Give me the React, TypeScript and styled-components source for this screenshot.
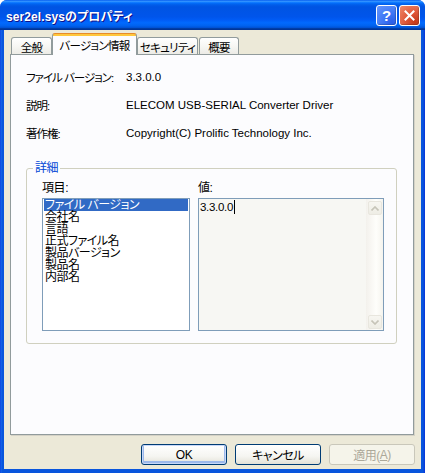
import React from 'react';
import styled, { createGlobalStyle } from 'styled-components';

const Global = createGlobalStyle`
  html, body { margin: 0; padding: 0; background: #ffffff; }
  body {
    font-family: "Liberation Sans", "Noto Sans CJK JP", sans-serif;
    font-size: 11px;
    letter-spacing: -0.4px;
    font-feature-settings: "palt";
    color: #000;
  }
  * { box-sizing: border-box; }
`;

const Window = styled.div`
  width: 425px;
  height: 473px;
  display: flex;
  flex-direction: column;
  background: linear-gradient(to right, #0831D9 0, #166AEE 1px, #0855DD 2px, #0855DD calc(100% - 2px), #0831D9 100%);
  border-radius: 7px 7px 0 0;
  overflow: hidden;
`;

const TitleBar = styled.div`
  height: 30px;
  flex: none;
  display: flex;
  align-items: center;
  padding: 0 5px 0 6px;
  background: linear-gradient(to bottom, #0058EE 0%, #3593FF 4%, #288EFF 6%, #127DFF 8%, #036FFC 10%, #0262EE 14%, #0057E5 20%, #0054E3 24%, #0055EB 56%, #005BF5 66%, #026AFE 76%, #0062EF 86%, #0052D6 92%, #0040AB 94%, #003092 100%);
`;

const Title = styled.div`
  flex: 1;
  color: #ffffff;
  font-weight: bold;
  font-size: 12px;
  letter-spacing: 0.1px;
  text-shadow: 1px 1px 0 #0F1089;
  white-space: nowrap;
`;

const CaptionButton = styled.div<{ $kind: 'help' | 'close' }>`
  width: 21px;
  height: 21px;
  margin-left: 2px;
  border: 1px solid #ffffff;
  border-radius: 3px;
  display: flex;
  align-items: center;
  justify-content: center;
  color: #ffffff;
  font-weight: bold;
  font-size: 15px;
  letter-spacing: 0;
  font-family: "Liberation Sans", sans-serif;
  background: ${(p) =>
    p.$kind === 'help'
      ? 'radial-gradient(circle at 80% 85%, #2B5EE8 0%, #3D76F5 40%, #6696FB 100%)'
      : 'radial-gradient(circle at 80% 85%, #C4391A 0%, #E0583A 45%, #EE8A6C 100%)'};
  box-shadow: inset -1px -1px 1px rgba(0, 0, 0, 0.2);
`;

const Body = styled.div`
  flex: 1;
  margin: 0 4px 4px;
  background: #ECE9D8;
  display: flex;
  flex-direction: column;
  padding: 3px 7px 0 6px;
`;

const TabRow = styled.div`
  height: 21px;
  flex: none;
  display: flex;
  align-items: flex-end;
  padding-left: 1px;
  position: relative;
  z-index: 1;
`;

const Tab = styled.div<{ $active?: boolean; $w: number; $gap?: number }>`
  width: ${(p) => p.$w}px;
  margin-left: ${(p) => p.$gap ?? 0}px;
  height: ${(p) => (p.$active ? 22 : 17)}px;
  margin-bottom: ${(p) => (p.$active ? -1 : 0)}px;
  border: 1px solid #919B9C;
  border-bottom: none;
  border-top: ${(p) => (p.$active ? '1px solid #E68B2C' : '1px solid #919B9C')};
  border-radius: 3px 3px 0 0;
  display: flex;
  align-items: center;
  justify-content: center;
  padding-top: ${(p) => (p.$active ? 0 : 1)}px;
  font-size: 11.5px;
  letter-spacing: -0.7px;
  background: ${(p) =>
    p.$active
      ? 'linear-gradient(to bottom, #FFC73C 0, #FFC73C 2px, #FCFCFE 2px, #FCFCFE 100%)'
      : 'linear-gradient(to bottom, #FFFFFF 0%, #F7F7F4 50%, #ECEBE6 100%)'};
  white-space: nowrap;
`;

const Panel = styled.div`
  height: 381px;
  flex: none;
  border: 1px solid #919B9C;
  background: #FCFCFE;
  box-shadow: 1px 1px 0 #D5D2C6;
  display: flex;
  flex-direction: column;
  padding: 8px 0 0 15px;
`;

const InfoGrid = styled.div`
  display: grid;
  grid-template-columns: 100px 1fr;
  grid-auto-rows: 28px;
  align-items: center;
  white-space: nowrap;
`;

const InfoLabel = styled.div`
  font-size: 11.5px;
  letter-spacing: -1px;
`;

const InfoValue = styled.div`
  font-size: 11.5px;
  letter-spacing: 0;
`;

const GroupBox = styled.div`
  width: 371px;
  height: 176px;
  margin-top: 21px;
  border: 1px solid #D0D0BF;
  border-radius: 3px;
  display: flex;
  flex-direction: column;
`;

const Legend = styled.div`
  align-self: flex-start;
  margin: -8px 0 0 6px;
  padding: 0 2px;
  line-height: 14px;
  height: 14px;
  font-size: 12px;
  color: #0046D5;
  background: #FCFCFE;
`;

const Columns = styled.div`
  display: flex;
  gap: 8px;
  margin-top: 6px;
  padding-left: 15px;
`;

const Column = styled.div`
  display: flex;
  flex-direction: column;
`;

const ColLabel = styled.div`
  line-height: 14px;
  height: 14px;
  font-size: 12px;
  margin-bottom: 3px;
`;

const ListBox = styled.div`
  width: 148px;
  height: 133px;
  border: 1px solid #7F9DB9;
  background: #ffffff;
  padding: 0 1px;
`;

const ListItem = styled.div<{ $selected?: boolean }>`
  height: 12px;
  line-height: 12px;
  font-size: 12px;
  letter-spacing: -0.5px;
  padding-left: 1px;
  white-space: nowrap;
  background: ${(p) => (p.$selected ? '#316AC5' : 'transparent')};
  color: ${(p) => (p.$selected ? '#ffffff' : '#000000')};
`;

const ValueBox = styled.div`
  width: 186px;
  height: 133px;
  border: 1px solid #7F9DB9;
  background: #F7F7F3;
  display: flex;
`;

const ValueText = styled.div`
  flex: 1;
  padding: 1px 1px;
  line-height: 14px;
  font-size: 11.5px;
  letter-spacing: -0.3px;
  display: flex;
  align-items: flex-start;
`;

const Caret = styled.span`
  display: inline-block;
  width: 1px;
  height: 14px;
  background: #000000;
  margin-left: 1px;
`;

const ScrollBar = styled.div`
  width: 17px;
  display: flex;
  flex-direction: column;
  justify-content: space-between;
  align-items: center;
  padding: 2px 0 1px;
  background: linear-gradient(to right, #F3F1EC, #FEFEFB 60%, #F5F4EE);
`;

const ScrollArrow = styled.div`
  width: 14px;
  height: 14px;
  border: 1px solid #E8E6DE;
  border-radius: 2px;
  background: linear-gradient(to bottom, #F7F6F1, #EEEDE5);
  display: flex;
  align-items: center;
  justify-content: center;
`;

const Footer = styled.div`
  display: flex;
  justify-content: flex-end;
  gap: 8px;
  margin-top: 9px;
  margin-right: -1px;
`;

const Button = styled.div<{ $default?: boolean; $disabled?: boolean }>`
  width: 86px;
  height: 21px;
  border: 1px solid ${(p) => (p.$disabled ? '#C9C7BA' : '#003C74')};
  border-radius: 3px;
  display: flex;
  align-items: center;
  justify-content: center;
  font-size: 12px;
  letter-spacing: -0.5px;
  color: ${(p) => (p.$disabled ? '#ACA899' : '#000000')};
  background: ${(p) =>
    p.$disabled ? '#F5F4EA' : 'linear-gradient(to bottom, #FFFFFF 0%, #F5F5F1 60%, #E3E1D7 100%)'};
  box-shadow: ${(p) => (p.$default ? 'inset 0 0 0 1px #C8D8F8, inset 0 -1px 0 2px #9DB9EB' : 'none')};
`;

const Underline = styled.span`
  text-decoration: underline;
`;

const Chevron = ({ up }: { up?: boolean }) => (
  <svg width="8" height="5" viewBox="0 0 8 5">
    <polyline
      points={up ? '0.5,4.5 4,1 7.5,4.5' : '0.5,0.5 4,4 7.5,0.5'}
      fill="none"
      stroke="#C6C4B8"
      strokeWidth="1.6"
    />
  </svg>
);

const CloseGlyph = () => (
  <svg width="11" height="11" viewBox="0 0 11 11">
    <path d="M1.5 1.5 L9.5 9.5 M9.5 1.5 L1.5 9.5" stroke="#ffffff" strokeWidth="2" strokeLinecap="square" />
  </svg>
);

const items = ['ファイル バージョン', '会社名', '言語', '正式ファイル名', '製品バージョン', '製品名', '内部名'];

export default function App() {
  return (
    <>
      <Global />
      <Window>
        <TitleBar>
          <Title>ser2el.sysのプロパティ</Title>
          <CaptionButton $kind="help">?</CaptionButton>
          <CaptionButton $kind="close">
            <CloseGlyph />
          </CaptionButton>
        </TitleBar>
        <Body>
          <TabRow>
            <Tab $w={41}>全般</Tab>
            <Tab $w={85} $active>
              バージョン情報
            </Tab>
            <Tab $w={61}>セキュリティ</Tab>
            <Tab $w={40} $gap={1}>
              概要
            </Tab>
          </TabRow>
          <Panel>
            <InfoGrid>
              <InfoLabel>ファイル バージョン:</InfoLabel>
              <InfoValue>3.3.0.0</InfoValue>
              <InfoLabel>説明:</InfoLabel>
              <InfoValue>ELECOM USB-SERIAL Converter Driver</InfoValue>
              <InfoLabel>著作権:</InfoLabel>
              <InfoValue>Copyright(C) Prolific Technology Inc.</InfoValue>
            </InfoGrid>
            <GroupBox>
              <Legend>詳細</Legend>
              <Columns>
                <Column>
                  <ColLabel>項目:</ColLabel>
                  <ListBox>
                    {items.map((it, i) => (
                      <ListItem key={it} $selected={i === 0}>
                        {it}
                      </ListItem>
                    ))}
                  </ListBox>
                </Column>
                <Column>
                  <ColLabel>値:</ColLabel>
                  <ValueBox>
                    <ValueText>
                      3.3.0.0
                      <Caret />
                    </ValueText>
                    <ScrollBar>
                      <ScrollArrow>
                        <Chevron up />
                      </ScrollArrow>
                      <ScrollArrow>
                        <Chevron />
                      </ScrollArrow>
                    </ScrollBar>
                  </ValueBox>
                </Column>
              </Columns>
            </GroupBox>
          </Panel>
          <Footer>
            <Button $default>OK</Button>
            <Button>キャンセル</Button>
            <Button $disabled>
              適用(<Underline>A</Underline>)
            </Button>
          </Footer>
        </Body>
      </Window>
    </>
  );
}
